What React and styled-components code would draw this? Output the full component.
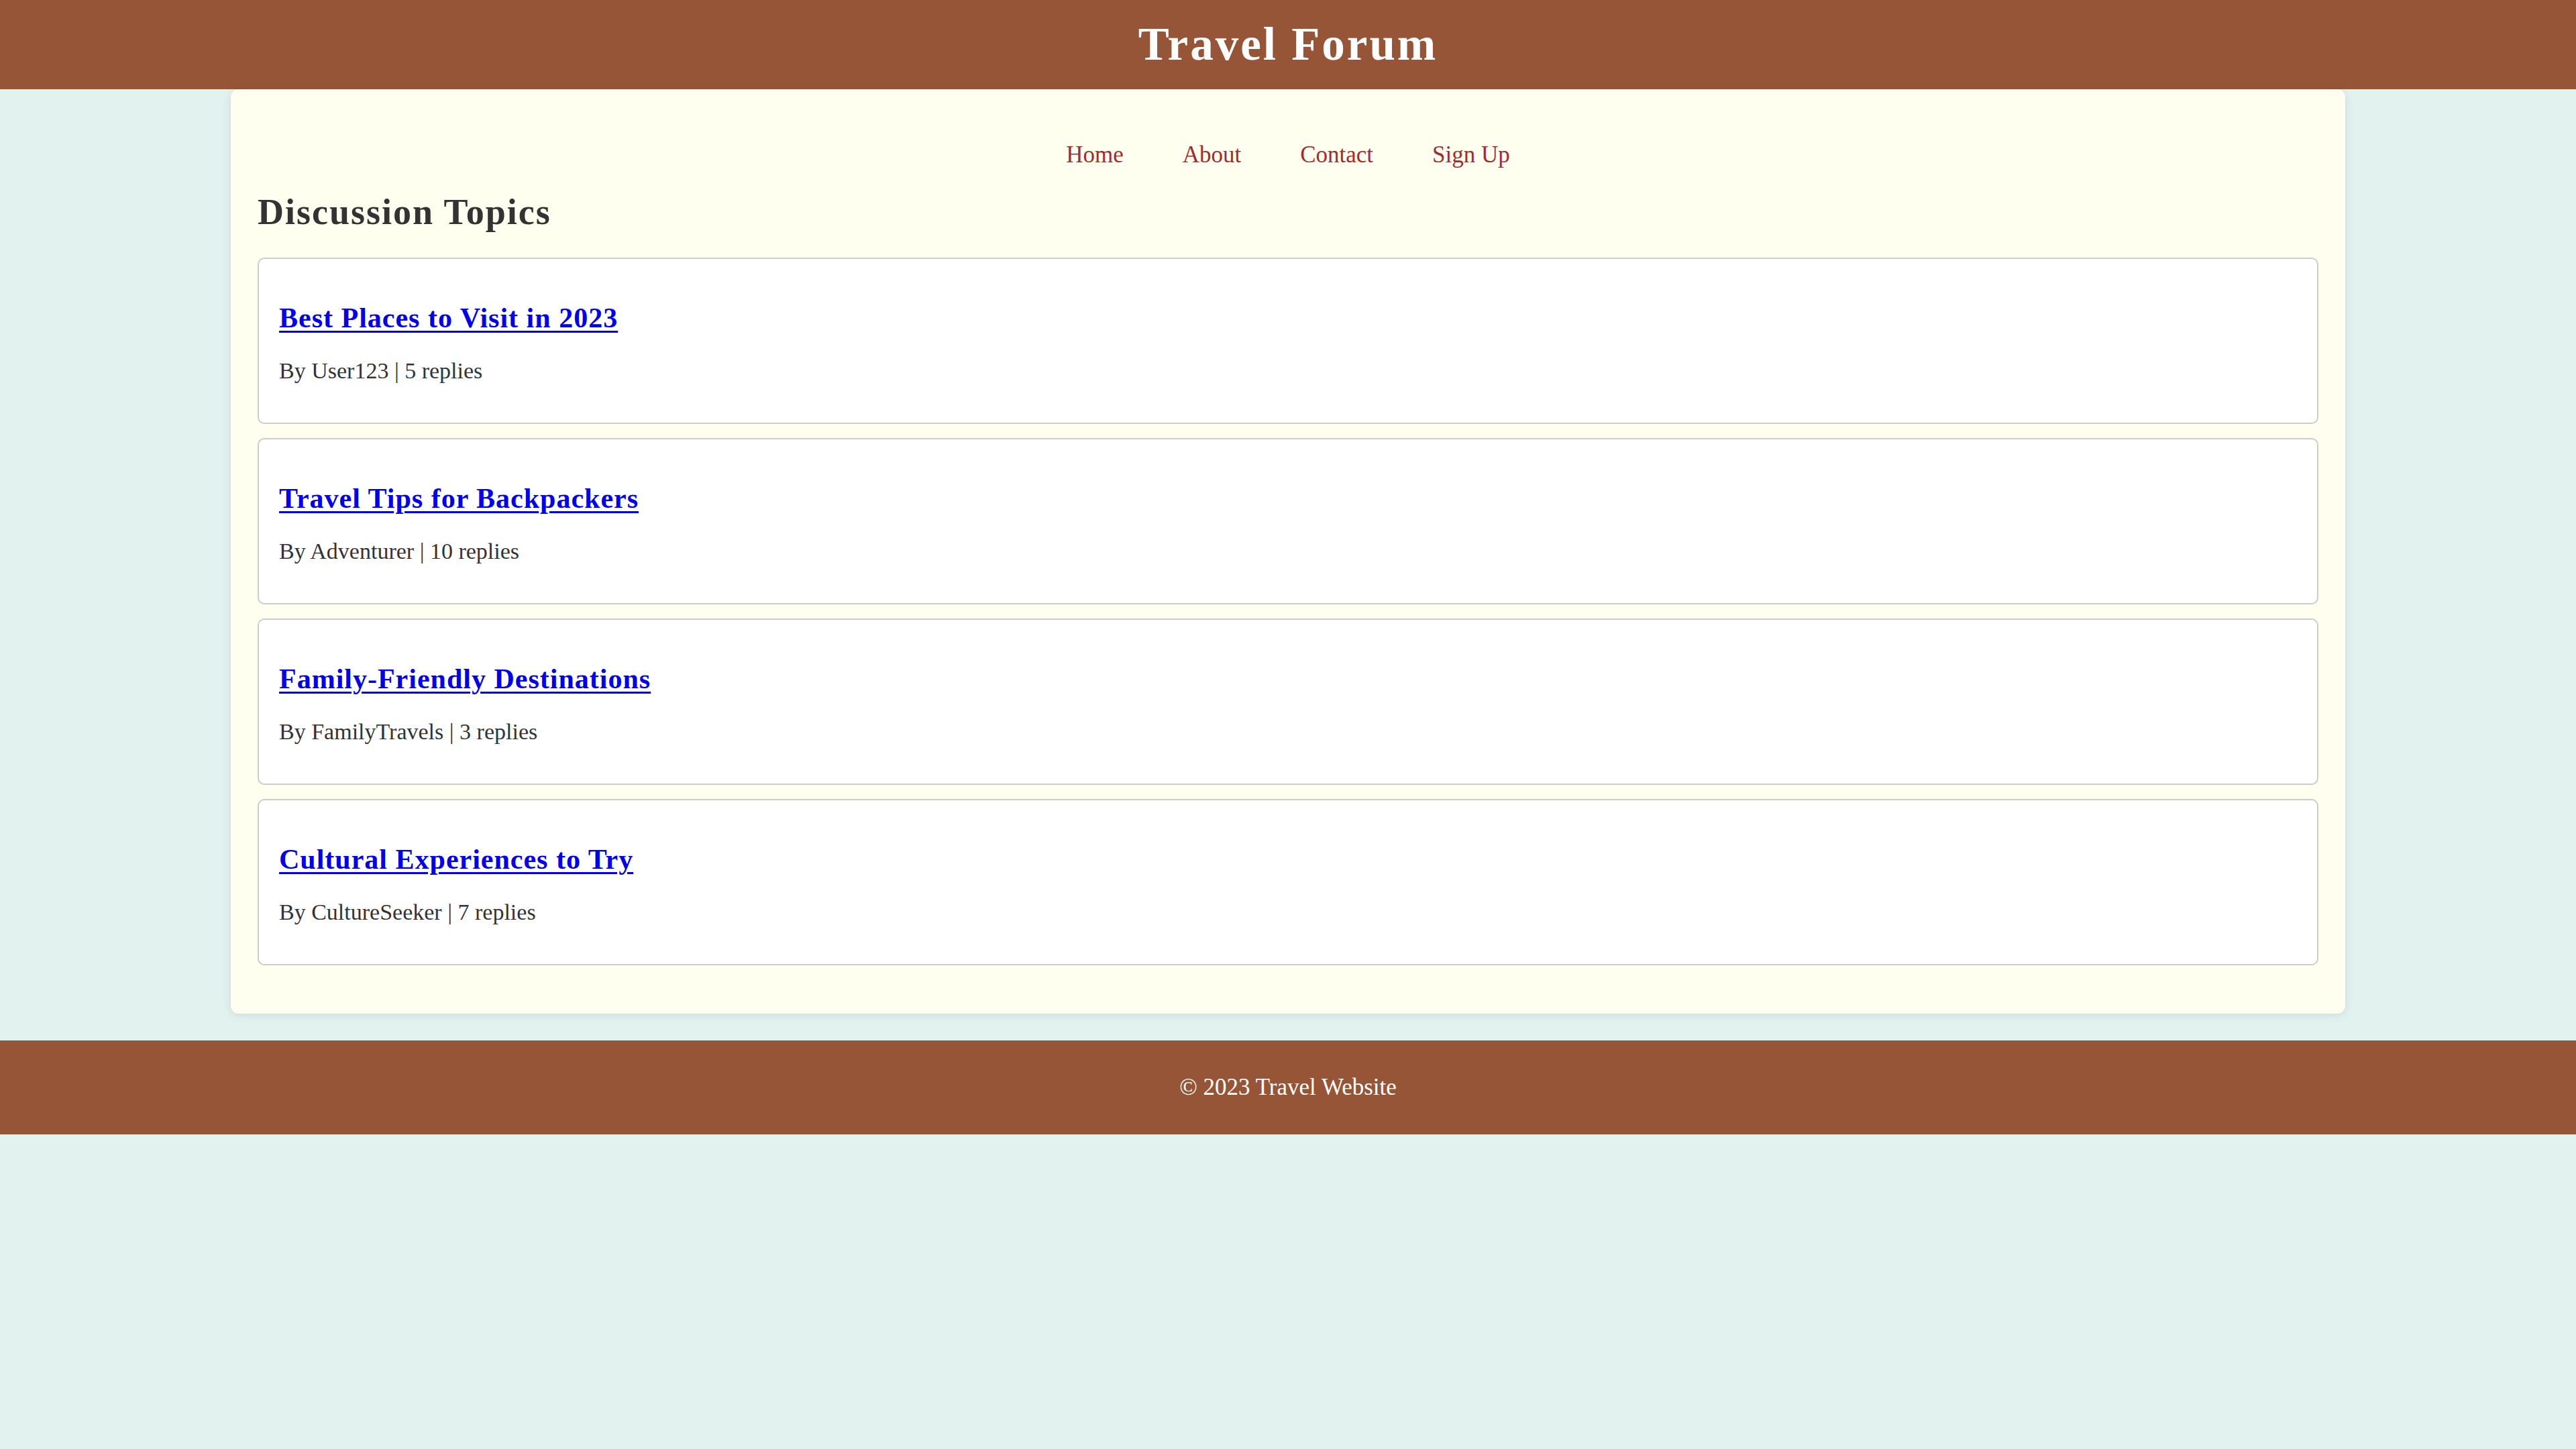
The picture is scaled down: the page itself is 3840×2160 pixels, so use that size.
import React from 'react'
import styled, { createGlobalStyle } from 'styled-components'

const GlobalStyle = createGlobalStyle`
  html, body {
    margin: 0;
    padding: 0;
    background-color: #e2f2ef;
    font-family: "Liberation Serif", "Times New Roman", serif;
  }
`

const Header = styled.header`
  height: 133px;
  background-color: #965537;
  display: flex;
  align-items: center;
  justify-content: center;
`

const SiteTitle = styled.h1`
  margin: 0;
  color: #ffffff;
  font-size: 69px;
  letter-spacing: 3px;
  font-weight: bold;
  line-height: 1;
`

const Container = styled.main`
  width: 3152px;
  margin: 0 auto;
  padding: 0 40px 72px;
  box-sizing: border-box;
  background-color: #fffff0;
  border-radius: 12px;
  box-shadow: 0 2px 14px rgba(0, 0, 0, 0.1);
`

const Nav = styled.nav`
  display: flex;
  justify-content: center;
  gap: 88px;
  padding-top: 73px;
  line-height: 50px;
`

const NavLink = styled.a`
  color: #a52a2a;
  font-size: 35px;
  text-decoration: none;
  cursor: pointer;
`

const SectionTitle = styled.h2`
  margin: 30px 0 38px;
  color: #333333;
  font-size: 54px;
  letter-spacing: 2px;
  line-height: 60px;
`

const TopicList = styled.div`
  display: flex;
  flex-direction: column;
  gap: 21px;
`

const Topic = styled.div`
  height: 248px;
  box-sizing: border-box;
  padding: 63px 30px 0;
  background-color: #ffffff;
  border: 2px solid #cccccc;
  border-radius: 10px;
`

const TopicTitle = styled.h3`
  margin: 0;
  font-size: 42px;
  letter-spacing: 1px;
  line-height: 50px;

  a {
    color: #0000ee;
    text-decoration: underline;
    text-decoration-thickness: 3px;
    text-underline-offset: 5px;
  }
`

const TopicMeta = styled.p`
  margin: 29px 0 0;
  color: #333333;
  font-size: 34px;
  line-height: 50px;
`

const Footer = styled.footer`
  margin-top: 40px;
  height: 140px;
  background-color: #965537;
  color: #ffffff;
  font-size: 35px;
  display: flex;
  align-items: center;
  justify-content: center;
`

const topics = [
  { title: 'Best Places to Visit in 2023', author: 'User123', replies: 5 },
  { title: 'Travel Tips for Backpackers', author: 'Adventurer', replies: 10 },
  { title: 'Family-Friendly Destinations', author: 'FamilyTravels', replies: 3 },
  { title: 'Cultural Experiences to Try', author: 'CultureSeeker', replies: 7 },
]

const App = () => {
  return (
    <>
      <GlobalStyle />
      <Header>
        <SiteTitle>Travel Forum</SiteTitle>
      </Header>

      <Container>
        <Nav>
          <NavLink>Home</NavLink>
          <NavLink>About</NavLink>
          <NavLink>Contact</NavLink>
          <NavLink>Sign Up</NavLink>
        </Nav>

        <SectionTitle>Discussion Topics</SectionTitle>

        <TopicList>
          {topics.map((t) => (
            <Topic key={t.title}>
              <TopicTitle><a href="#">{t.title}</a></TopicTitle>
              <TopicMeta>By {t.author} | {t.replies} replies</TopicMeta>
            </Topic>
          ))}
        </TopicList>
      </Container>

      <Footer>© 2023 Travel Website</Footer>
    </>
  )
}

export default App
